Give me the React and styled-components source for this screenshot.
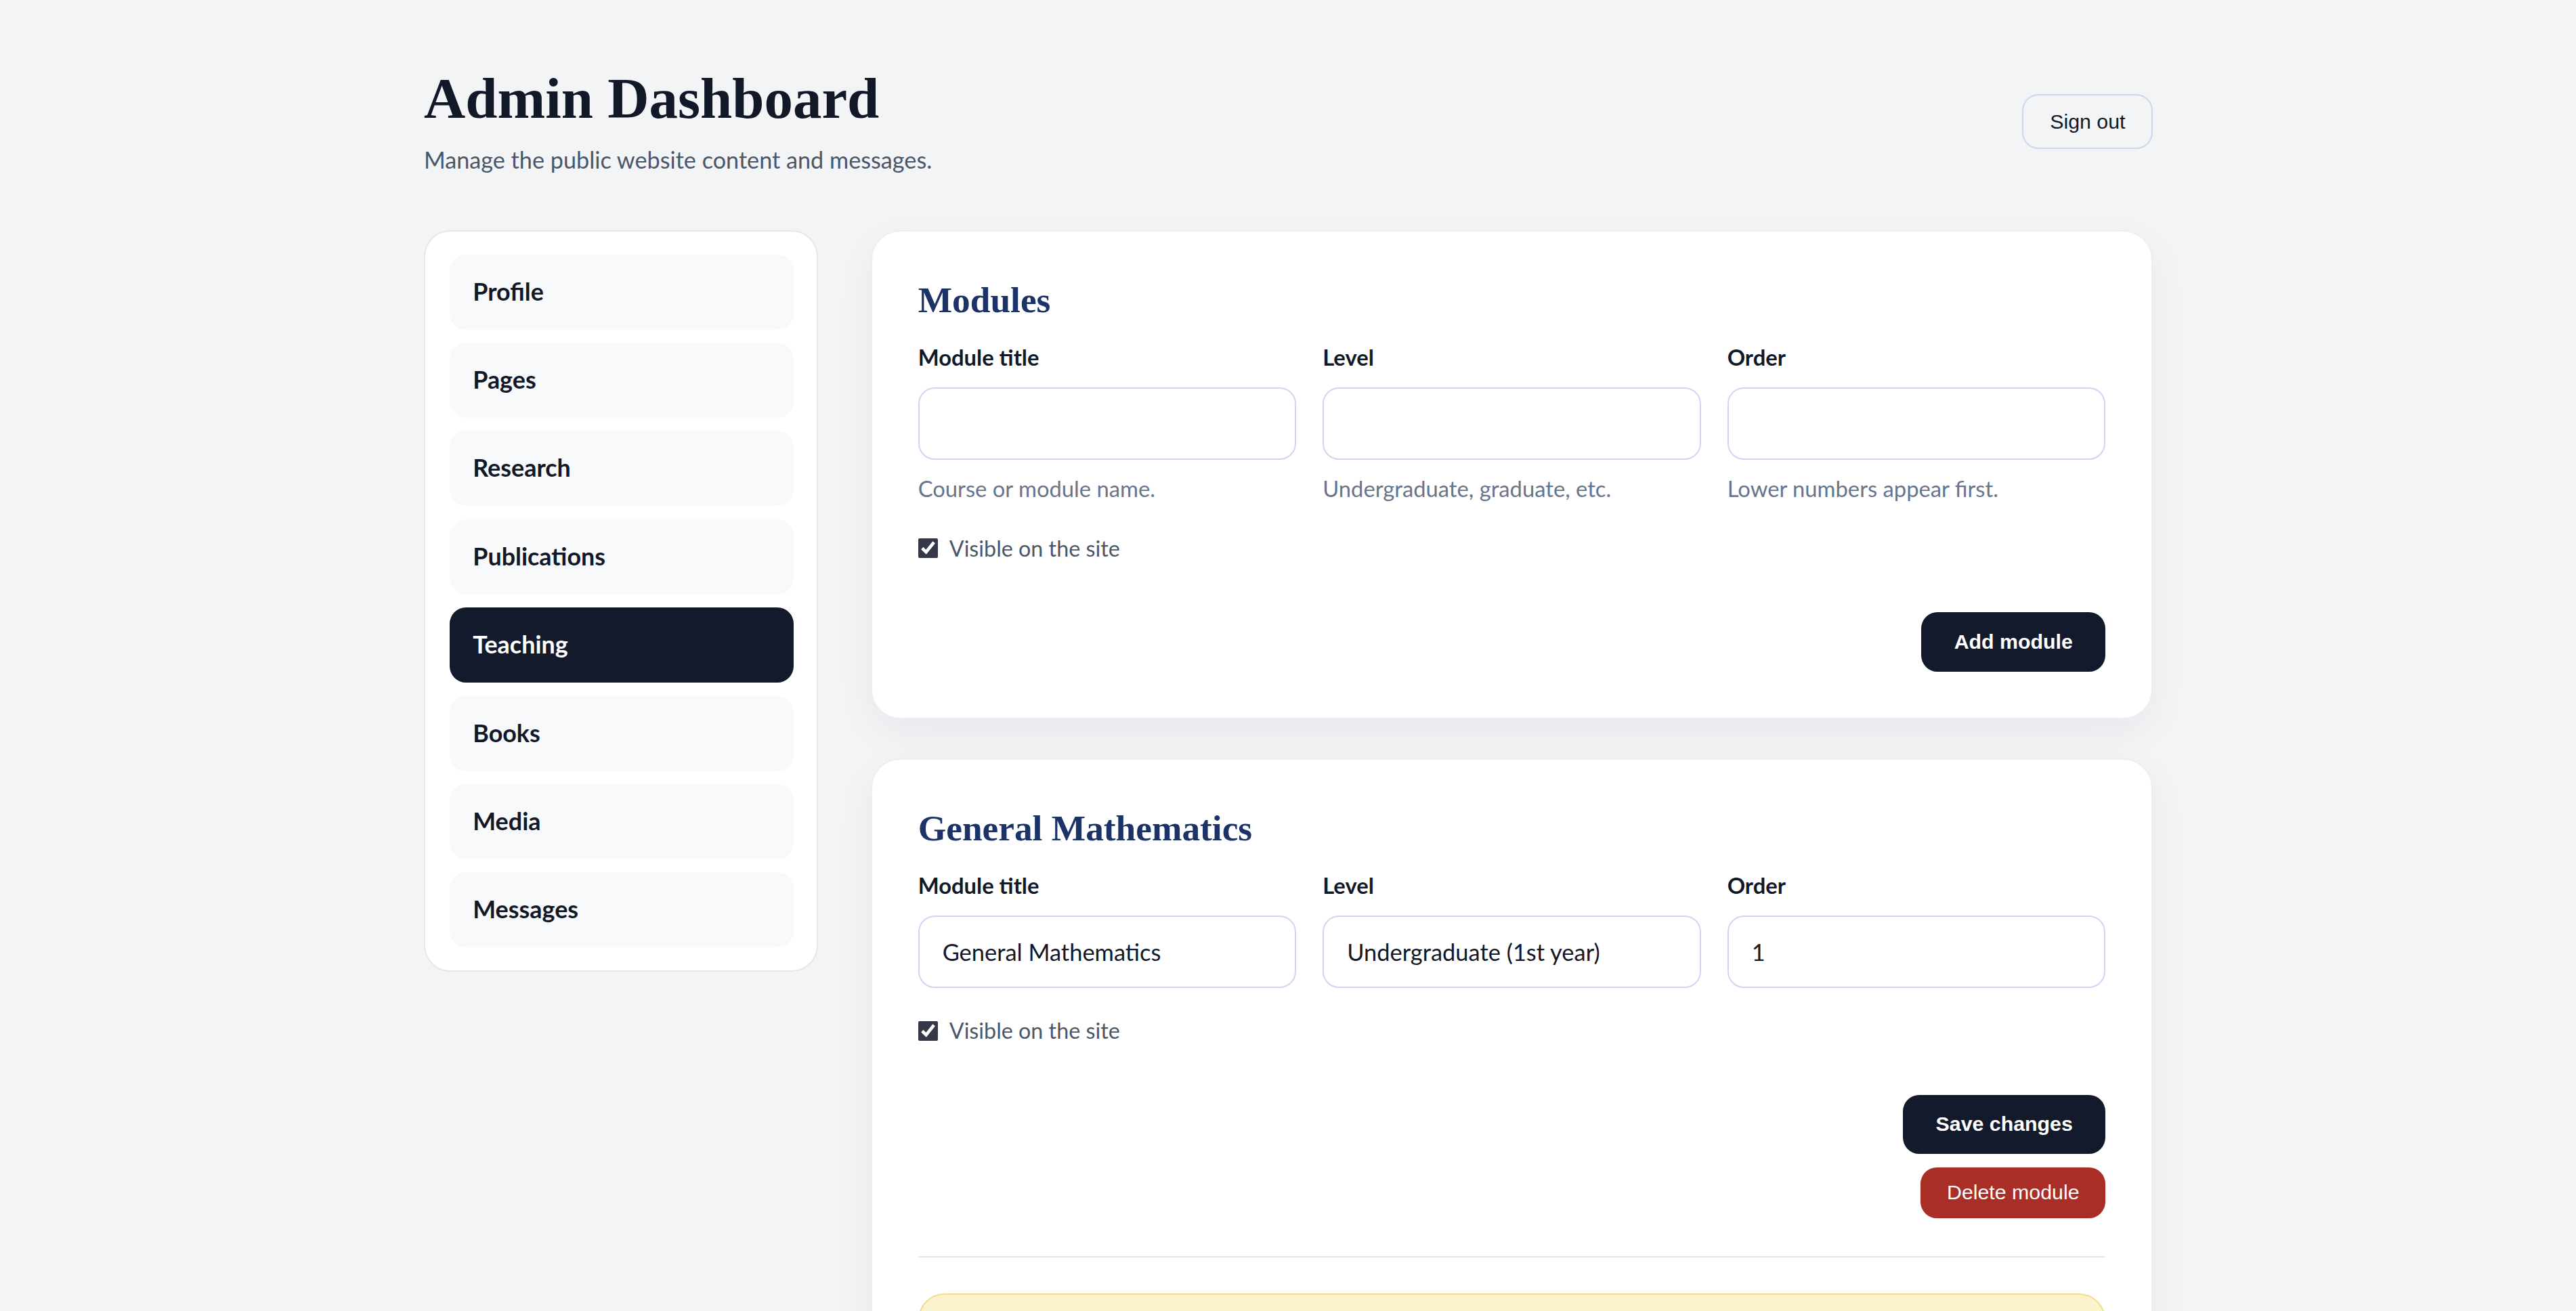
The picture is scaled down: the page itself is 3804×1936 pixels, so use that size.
import React from "react";
import styled, { createGlobalStyle, css } from "styled-components";

// The dashboard is laid out in CSS pixels and drawn at a fixed display scale.
const SCALE = 2.426;
const u = (n) => `${Math.round(n * SCALE * 100) / 100}px`;

const GlobalStyle = createGlobalStyle`
  html, body {
    margin: 0;
    padding: 0;
  }
  body {
    background: #f3f4f6;
    color: #111827;
    font-family: Lato, "Noto Sans", "Liberation Sans", sans-serif;
    min-height: 100vh;
    overflow: hidden;
  }
  * { box-sizing: border-box; }
`;

const Page = styled.div`
  max-width: ${u(1100)};
  margin: 0 auto;
  padding: ${u(40)} ${u(23.5)} ${u(40)} ${u(24)};
`;

const Header = styled.header`
  display: flex;
  justify-content: space-between;
  align-items: center;
  margin-bottom: ${u(32)};
`;

const TitleBlock = styled.div`
  display: flex;
  flex-direction: column;
  gap: ${u(6)};
`;

const Title = styled.h1`
  margin: 0;
  font-family: "Liberation Serif", "DejaVu Serif", serif;
  font-weight: 700;
  font-size: ${u(35)};
  line-height: ${u(40)};
  color: #111827;
`;

const Subtitle = styled.p`
  margin: 0;
  font-size: ${u(14.1)};
  line-height: ${u(22)};
  color: #4b5669;
`;

const ButtonBase = css`
  font-family: "Liberation Sans", Arial, sans-serif;
  font-size: ${u(12.5)};
  border-radius: ${u(10)};
  cursor: pointer;
  display: inline-flex;
  align-items: center;
  justify-content: center;
`;

const OutlineButton = styled.button`
  ${ButtonBase};
  height: ${u(33)};
  padding: 0 ${u(16)};
  background: transparent;
  color: #111827;
  border: ${u(1)} solid #cdd6f3;
`;

const Button = styled.button`
  ${ButtonBase};
  border: none;
  color: #ffffff;
  ${({ $variant }) =>
    $variant === "danger"
      ? css`
          height: ${u(31)};
          padding: 0 ${u(16)};
          background: #a92e27;
          font-weight: 400;
        `
      : css`
          height: ${u(36)};
          padding: 0 ${u(20)};
          background: #131a2b;
          font-weight: 700;
        `}
`;

const Layout = styled.div`
  display: grid;
  grid-template-columns: ${u(240)} 1fr;
  gap: ${u(32)};
  align-items: start;
`;

const Sidebar = styled.nav`
  background: #ffffff;
  border: ${u(1)} solid #e5e7eb;
  border-radius: ${u(16)};
  padding: ${u(14)} ${u(14)} ${u(14)} ${u(15)};
  display: flex;
  flex-direction: column;
  gap: ${u(8)};
`;

const NavItem = styled.a`
  display: block;
  padding: ${u(12)} ${u(14)};
  line-height: ${u(21.75)};
  font-size: ${u(14.8)};
  font-weight: 700;
  border-radius: ${u(10)};
  text-decoration: none;
  background: ${({ $active }) => ($active ? "#131a2b" : "#f7f9fb")};
  color: ${({ $active }) => ($active ? "#ffffff" : "#111827")};
`;

const Main = styled.main`
  display: flex;
  flex-direction: column;
  gap: ${u(24)};
`;

const Card = styled.section`
  background: #ffffff;
  border: ${u(1)} solid #eceef2;
  border-radius: ${u(18)};
  padding: ${u(28)};
  box-shadow: 0 ${u(8)} ${u(24)} rgba(15, 23, 42, 0.05);
`;

const CardTitle = styled.h2`
  margin: 0 0 ${u(11)};
  font-family: "Liberation Serif", "DejaVu Serif", serif;
  font-weight: 700;
  font-size: ${u(22)};
  line-height: ${u(28)};
  color: #1b3366;
`;

const Form = styled.form`
  display: flex;
  flex-direction: column;
  gap: ${u(16)};
`;

const FieldGrid = styled.div`
  display: grid;
  grid-template-columns: repeat(3, 1fr);
  gap: ${u(16)};
`;

const Field = styled.label`
  display: flex;
  flex-direction: column;
  gap: ${u(8)};
`;

const Label = styled.span`
  font-size: ${u(13.5)};
  line-height: ${u(20)};
  font-weight: 700;
  color: #111827;
`;

const Input = styled.input`
  height: ${u(44)};
  padding: 0 ${u(14)};
  border: ${u(1)} solid #cdd6f3;
  border-radius: ${u(10)};
  background: #ffffff;
  font-family: inherit;
  font-size: ${u(14.2)};
  color: #111827;
  outline: none;
`;

const Hint = styled.span`
  font-size: ${u(13.5)};
  line-height: ${u(20)};
  color: #66758c;
`;

const CheckRow = styled.label`
  display: flex;
  align-items: center;
  gap: ${u(7)};
  font-size: ${u(13.3)};
  line-height: ${u(20)};
  color: #4b5669;
`;

const Checkbox = styled.input.attrs({ type: "checkbox" })`
  width: ${u(12)};
  height: ${u(12)};
  margin: 0;
  accent-color: #343848;
`;

const Actions = styled.div`
  margin-top: ${u(13)};
  display: flex;
  flex-direction: column;
  align-items: flex-end;
  gap: ${u(8)};
`;

const Divider = styled.hr`
  border: none;
  height: ${u(1)};
  background: #e5e7eb;
  margin: ${u(23)} 0 ${u(22)};
`;

const Notice = styled.div`
  background: #fcf3cc;
  border: ${u(1)} solid #f4dc8e;
  border-radius: ${u(16)};
  padding: ${u(28)} ${u(20)} ${u(20)};
  font-size: ${u(14)};
  line-height: ${u(20)};
  color: #7a5a12;
`;

const sections = [
  "Profile",
  "Pages",
  "Research",
  "Publications",
  "Teaching",
  "Books",
  "Media",
  "Messages",
];

const modules = [
  { id: 1, title: "General Mathematics", level: "Undergraduate (1st year)", order: "1", visible: true },
];

function ModuleFields({ values, hints }) {
  return (
    <FieldGrid>
      <Field>
        <Label>Module title</Label>
        <Input defaultValue={values.title} />
        {hints && <Hint>Course or module name.</Hint>}
      </Field>
      <Field>
        <Label>Level</Label>
        <Input defaultValue={values.level} />
        {hints && <Hint>Undergraduate, graduate, etc.</Hint>}
      </Field>
      <Field>
        <Label>Order</Label>
        <Input defaultValue={values.order} />
        {hints && <Hint>Lower numbers appear first.</Hint>}
      </Field>
    </FieldGrid>
  );
}

export default function App() {
  const stop = (e) => e.preventDefault();
  return (
    <>
      <GlobalStyle />
      <Page>
        <Header>
          <TitleBlock>
            <Title>Admin Dashboard</Title>
            <Subtitle>Manage the public website content and messages.</Subtitle>
          </TitleBlock>
          <OutlineButton type="button">Sign out</OutlineButton>
        </Header>

        <Layout>
          <Sidebar>
            {sections.map((name) => (
              <NavItem key={name} href="#" $active={name === "Teaching"}>
                {name}
              </NavItem>
            ))}
          </Sidebar>

          <Main>
            <Card>
              <CardTitle>Modules</CardTitle>
              <Form onSubmit={stop}>
                <ModuleFields values={{ title: "", level: "", order: "" }} hints />
                <CheckRow>
                  <Checkbox defaultChecked />
                  Visible on the site
                </CheckRow>
                <Actions>
                  <Button type="submit">Add module</Button>
                </Actions>
              </Form>
            </Card>

            {modules.map((m) => (
              <Card key={m.id}>
                <CardTitle>{m.title}</CardTitle>
                <Form onSubmit={stop}>
                  <ModuleFields values={m} />
                  <CheckRow>
                    <Checkbox defaultChecked={m.visible} />
                    Visible on the site
                  </CheckRow>
                  <Actions>
                    <Button type="submit">Save changes</Button>
                    <Button type="button" $variant="danger">
                      Delete module
                    </Button>
                  </Actions>
                </Form>
                <Divider />
                <Notice>No lessons have been added to this module yet.</Notice>
              </Card>
            ))}
          </Main>
        </Layout>
      </Page>
    </>
  );
}
